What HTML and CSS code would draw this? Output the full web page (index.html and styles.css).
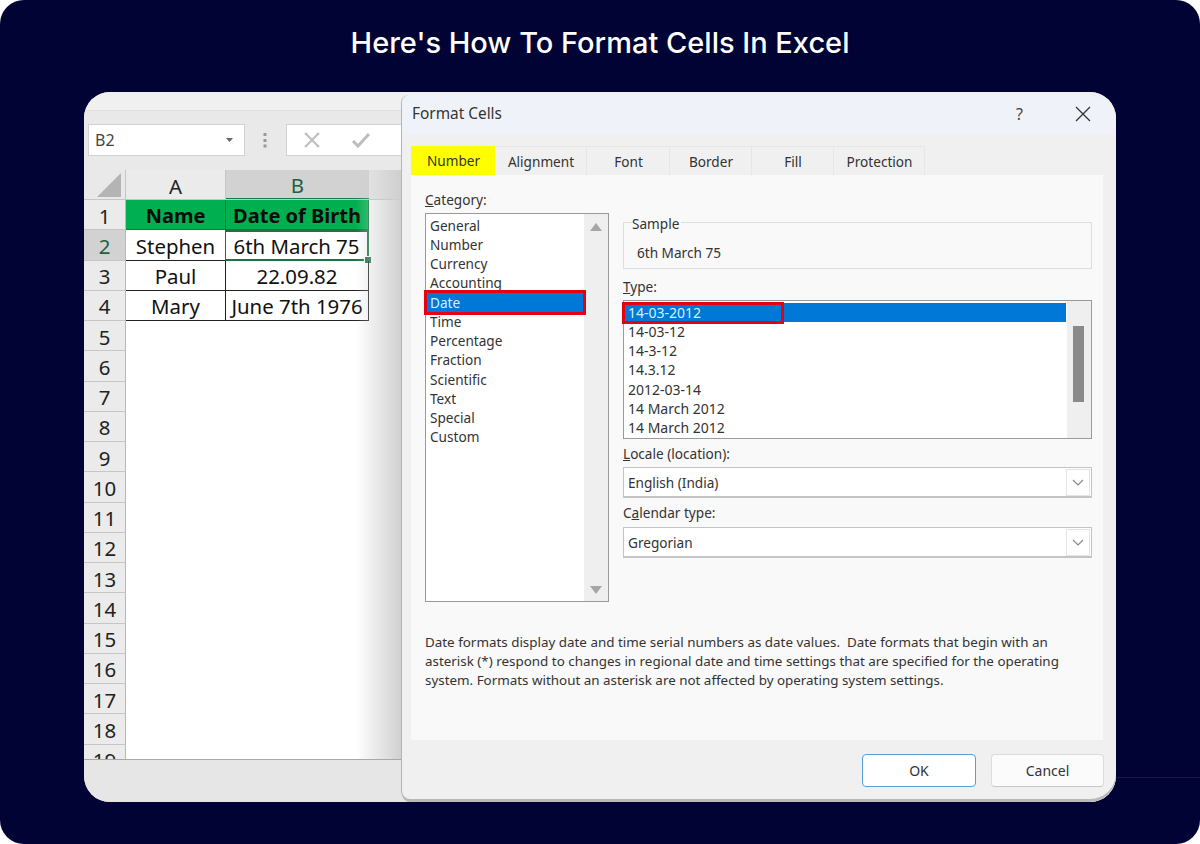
FILE: index.html
```html
<!DOCTYPE html>
<html lang="en">
<head>
<meta charset="utf-8">
<title>Here's How To Format Cells In Excel</title>
<link rel="stylesheet" href="styles.css">
</head>
<body>
<main class="frame">
  <h1 class="headline">Here's How To Format Cells In Excel</h1>
  <div class="stray-line"></div>
  <section class="window">
    <div class="excel">
      <div class="ribbon-edge"></div>
      <div class="formula-bar">
        <div class="name-box"><span>B2</span><svg class="caret" viewBox="0 0 8 4" width="8" height="4"><path d="M0 0h7L3.500 4z" fill="#666"/></svg></div>
        <svg class="dots" viewBox="0 0 4 16" width="4" height="16"><g fill="#999"><rect x="0.500" y="1" width="3" height="3"/><rect x="0.500" y="7" width="3" height="3"/><rect x="0.500" y="12.500" width="3" height="3"/></g></svg>
        <div class="formula-box">
          <svg viewBox="0 0 18 16" width="18" height="16"><path d="M2 1l14 14M16 1L2 15" stroke="#bdbdbd" stroke-width="2" fill="none"/></svg>
          <svg viewBox="0 0 20 16" width="20" height="16"><path d="M2 9l5 5L18 2" stroke="#bdbdbd" stroke-width="3" fill="none"/></svg>
        </div>
      </div>
      <div class="sheet">
        <div class="col-head">
          <div class="corner"><svg viewBox="0 0 24 24" width="24" height="24"><path d="M24 0v24H0z" fill="#b4b4b4"/></svg></div>
          <div class="col a">A</div>
          <div class="col b">B</div>
        </div>
        <div class="row"><div class="rh">1</div><div class="cell a hd">Name</div><div class="cell b hd">Date of Birth</div></div>
        <div class="row"><div class="rh on">2</div><div class="cell a">Stephen</div><div class="cell b sel">6th March 75<i class="handle"></i></div></div>
        <div class="row"><div class="rh">3</div><div class="cell a">Paul</div><div class="cell b">22.09.82</div></div>
        <div class="row"><div class="rh">4</div><div class="cell a">Mary</div><div class="cell b">June 7th 1976</div></div>
        <div class="row"><div class="rh">5</div></div>
        <div class="row"><div class="rh">6</div></div>
        <div class="row"><div class="rh">7</div></div>
        <div class="row"><div class="rh">8</div></div>
        <div class="row"><div class="rh">9</div></div>
        <div class="row"><div class="rh">10</div></div>
        <div class="row"><div class="rh">11</div></div>
        <div class="row"><div class="rh">12</div></div>
        <div class="row"><div class="rh">13</div></div>
        <div class="row"><div class="rh">14</div></div>
        <div class="row"><div class="rh">15</div></div>
        <div class="row"><div class="rh">16</div></div>
        <div class="row"><div class="rh">17</div></div>
        <div class="row"><div class="rh">18</div></div>
        <div class="row"><div class="rh">19</div></div>
        <div class="dialog-shade"></div>
      </div>
      <div class="status-bar"></div>
    </div>

    <div class="dialog">
      <header class="titlebar">
        <span class="dlg-title">Format Cells</span>
        <span class="help">?</span>
        <svg class="close" viewBox="0 0 16 16" width="16" height="16"><path d="M1 1l14 14M15 1L1 15" stroke="#333" stroke-width="1.300" fill="none"/></svg>
      </header>
      <div class="dlg-body">
        <nav class="tabs">
          <span class="tab current">Number</span>
          <span class="tab t-align">Alignment</span>
          <span class="tab t-font">Font</span>
          <span class="tab t-border">Border</span>
          <span class="tab t-fill">Fill</span>
          <span class="tab t-prot">Protection</span>
        </nav>
        <div class="panel">
          <div class="columns">
            <div class="left-col">
              <div class="label"><u>C</u>ategory:</div>
              <div class="cat-list">
                <ul class="items">
                  <li>General</li><li>Number</li><li>Currency</li><li>Accounting</li>
                  <li class="picked boxed">Date</li>
                  <li>Time</li><li>Percentage</li><li>Fraction</li><li>Scientific</li><li>Text</li><li>Special</li><li>Custom</li>
                </ul>
                <div class="scroll arrows">
                  <svg viewBox="0 0 12 8" width="12" height="8"><path d="M6 0l6 8H0z" fill="#a6a6a6"/></svg>
                  <svg viewBox="0 0 12 8" width="12" height="8"><path d="M0 0h12L6 8z" fill="#a6a6a6"/></svg>
                </div>
              </div>
            </div>
            <div class="right-col">
              <div class="sample"><span class="sample-legend">Sample</span><span class="sample-value">6th March 75</span></div>
              <div class="label type-label"><u>T</u>ype:</div>
              <div class="type-list">
                <ul class="items">
                  <li class="picked">14-03-2012<i class="type-box"></i></li>
                  <li>14-03-12</li><li>14-3-12</li><li>14.3.12</li><li>2012-03-14</li><li>14 March 2012</li><li>14 March 2012</li>
                </ul>
                <div class="scroll"><div class="thumb"></div></div>
              </div>
              <div class="label combo-label"><u>L</u>ocale (location):</div>
              <div class="combo"><span>English (India)</span><b class="drop"><svg viewBox="0 0 12 7" width="12" height="7"><path d="M1 1l5 5 5-5" stroke="#888" stroke-width="1.200" fill="none"/></svg></b></div>
              <div class="label combo-label"><span>C</span><u>a</u>lendar type:</div>
              <div class="combo"><span>Gregorian</span><b class="drop"><svg viewBox="0 0 12 7" width="12" height="7"><path d="M1 1l5 5 5-5" stroke="#888" stroke-width="1.200" fill="none"/></svg></b></div>
            </div>
          </div>
          <p class="desc">Date formats display date and time serial numbers as date values.  Date formats that begin with an<br>asterisk (*) respond to changes in regional date and time settings that are specified for the operating<br>system. Formats without an asterisk are not affected by operating system settings.</p>
        </div>
        <footer class="actions">
          <button class="btn ok" type="button">OK</button>
          <button class="btn" type="button">Cancel</button>
        </footer>
      </div>
    </div>
  </section>
</main>
</body>
</html>
```

FILE: styles.css
```css
* { box-sizing: border-box; }
html, body { margin: 0; padding: 0; background: #fff; }
body { width: 1200px; height: 844px; overflow: hidden; font-family: "Noto Sans", "Open Sans", sans-serif; }

.frame {
  position: relative;
  width: 1200px;
  height: 844px;
  background: #000333;
  border-radius: 24px;
  padding-top: 22px;
  overflow: hidden;
}
.headline {
  margin: 0;
  height: 70px;
  line-height: 42px;
  text-align: center;
  font-family: Inter, "Noto Sans", sans-serif;
  font-weight: 500;
  font-size: 29px;
  color: #fff;
}
.stray-line { position: absolute; left: 1116px; right: 0; top: 777px; height: 1px; background: #171a45; }

.window {
  position: relative;
  width: 1032px;
  height: 710px;
  margin-left: 84px;
  border-radius: 26px;
  overflow: hidden;
  background: #e6e6e6;
}

/* Excel */
.excel { display: flex; flex-direction: column; height: 100%; color: #222; }
.ribbon-edge { height: 19px; background: #f0f0f0; border-bottom: 1px solid #e0e0e0; flex: none; }
.formula-bar { display: flex; align-items: center; height: 59px; padding: 0 0 2px 4px; background: #e9e9e9; flex: none; }
.name-box {
  width: 157px; height: 32px; background: #fff; border: 1px solid #d2d2d2;
  display: flex; align-items: center; justify-content: space-between; padding: 0 10px 0 6px;
  font-size: 16px; color: #444;
}
.dots { margin-left: 18px; }
.formula-box {
  margin-left: 19px; width: 140px; height: 32px; background: #fff; border: 1px solid #d2d2d2;
  display: flex; align-items: center; gap: 30px; padding-left: 16px;
}
.sheet { position: relative; flex: 1; min-height: 0; overflow: hidden; background: #fff; display: flex; flex-direction: column; }
.col-head { display: flex; height: 30px; flex: none; background: #e9e9e9; border-bottom: 1px solid #c6c6c6; }
.corner { width: 42px; display: flex; align-items: flex-end; justify-content: flex-end; padding: 0 4px 2px 0; border-right: 1px solid #c6c6c6; }
.col { display: flex; align-items: center; justify-content: center; font-size: 20.400px; color: #222; padding-top: 2px; }
.col.a { width: 100px; background: #ebebeb; border-right: 1px solid #c6c6c6; }
.col.b { width: 143px; background: #d2d2d2; color: #21603f; border-bottom: 1px solid #1c7a47; }
.row { display: flex; height: 30.25px; flex: none; }
.rh {
  width: 42px; flex: none; background: #ebebeb; border-right: 1px solid #b8b8b8; border-bottom: 1px solid #c6c6c6;
  display: flex; align-items: center; justify-content: center; padding-top: 2px; font-size: 20.400px; color: #222;
}
.rh.on { background: #d2d2d2; color: #21603f; }
.cell {
  position: relative; display: flex; align-items: center; justify-content: center; padding-top: 2px;
  font-size: 20.400px; color: #111; white-space: nowrap;
  border-right: 1px solid #222; border-bottom: 1px solid #222;
}
.cell.a { width: 100px; }
.cell.b { width: 144px; border-left: 1px solid #222; margin-left: -1px; }
.cell.hd { background: #00b050; font-weight: 700; font-size: 20px; border-color: #0f7a3e; color: #0b0b0b; }
.cell.sel { border: 2px solid #1f7246; border-left-width: 1px; }
.handle { position: absolute; right: -4px; bottom: -4px; width: 6px; height: 6px; background: #1f7246; border: 1px solid #fff; box-sizing: content-box; margin: -1px; }
.dialog-shade { position: absolute; top: 0; bottom: 0; right: 0; width: 750px; pointer-events: none; }
.dialog-shade::before {
  content: ""; position: absolute; top: 0; bottom: 0; right: 714px; width: 46px;
  background: linear-gradient(to right, rgba(200,200,200,0), rgba(205,205,205,.95));
}
.status-bar { height: 43px; flex: none; background: #e6e6e6; border-top: 1px solid #a8a8a8; }

/* Dialog */
.dialog {
  position: absolute; left: 318px; top: 3px; right: 0; bottom: 3px;
  border-radius: 8px 26px 26px 8px;
  background: #f0f0f0;
  box-shadow: -1px 0 0 #b5b5b5, 0 3px 0 #b9b9b9;
  color: #333;
  display: flex; flex-direction: column;
  font-size: 13.600px;
  overflow: hidden;
}
.titlebar { height: 39px; flex: none; background: #eff3f9; display: flex; align-items: center; padding: 0 25px 2px 10px; }
.dlg-title { font-size: 15.400px; flex: 1; color: #333; }
.help { font-size: 16px; color: #444; margin-right: 52px; }
.dlg-body { flex: 1; display: flex; flex-direction: column; padding: 0 13px 0 9px; }
.tabs { display: flex; height: 41px; padding-top: 12px; flex: none; }
.tab {
  display: flex; align-items: center; justify-content: center; height: 29px; padding-left: 1px;
  border: 1px solid #e6e6e6; border-bottom: 0; border-left: 0; background: #f0f0f0; color: #333;
}
.tab.current { width: 84px; background: #ffff00; border: 0; }
.t-align { width: 92px; }
.t-font { width: 83px; }
.t-border { width: 82px; }
.t-fill { width: 82px; }
.t-prot { width: 91px; }
.panel { height: 565px; flex: none; background: #f9f9f9; padding: 16px 12px 0 14px; }
.columns { display: flex; gap: 14px; height: 411px; }
.left-col { width: 184px; flex: none; }
.right-col { width: 469px; flex: none; padding-top: 31px; }
.label { height: 18px; line-height: 18px; color: #333; }
.cat-list { margin-top: 4px; height: 389px; border: 1px solid #9a9a9a; background: #fff; display: flex; }
.items { list-style: none; margin: 0; padding: 2px 1px; flex: 1; min-width: 0; }
.items li { position: relative; height: 19.250px; line-height: 19px; padding-left: 3px; white-space: nowrap; color: #333; }
.scroll { width: 24px; flex: none; background: #efefef; position: relative; }
.arrows { display: flex; flex-direction: column; justify-content: space-between; align-items: center; padding: 9px 0 7px; }
.cat-list .items { padding-top: 1.500px; }
.picked { background: #0078d7; color: #dbeeff !important; }
.boxed { outline: 3px solid #e60012; outline-offset: 0; z-index: 1; }
.sample { position: relative; height: 47px; border: 1px solid #dedede; display: flex; align-items: flex-end; padding: 0 0 5px 13px; }
.sample-legend { position: absolute; left: 8px; top: -8px; line-height: 18px; background: #f9f9f9; padding-right: 2px; }
.sample-value { line-height: 20px; }
.type-label { margin-top: 9px; }
.type-list { margin-top: 4px; height: 139px; border: 1px solid #9a9a9a; background: #fff; display: flex; font-size: 14px; }
.type-list .items { padding: 1.500px 1px 0 1px; }
.type-box { position: absolute; left: -3px; top: -1px; width: 162px; height: 22px; border: 3px solid #e60012; }
.thumb { position: absolute; left: 6px; top: 25px; width: 11px; height: 76px; background: #8a8a8a; }
.combo-label { margin-top: 6px; }
.combo { margin-top: 4px; height: 31px; border: 1px solid #c4c4c4; border-bottom: 2px solid #c4c4c4; background: #fff; display: flex; align-items: center; justify-content: space-between; padding: 0 1px 0 4px; }
.combo-label + .combo + .combo-label + .combo { margin-top: 5px; }
.drop { width: 24px; height: 27px; border: 1px solid #e4e4e4; display: flex; align-items: center; justify-content: center; background: #fff; }
.desc { margin: 31px 0 0; line-height: 19px; font-size: 13.400px; color: #333; white-space: pre-wrap; }
.actions { display: flex; justify-content: flex-end; gap: 15px; padding-top: 14px; margin-right: -1px; }
.btn {
  width: 113px; height: 33px; background: #fbfbfb; border: 1px solid #dcdcdc; border-bottom-color: #c8c8c8; border-radius: 4px;
  font: 14px "Noto Sans", sans-serif; color: #333; padding: 0;
}
.btn.ok { width: 114px; background: #fff; border: 1.500px solid #5a9fd4; }
```
